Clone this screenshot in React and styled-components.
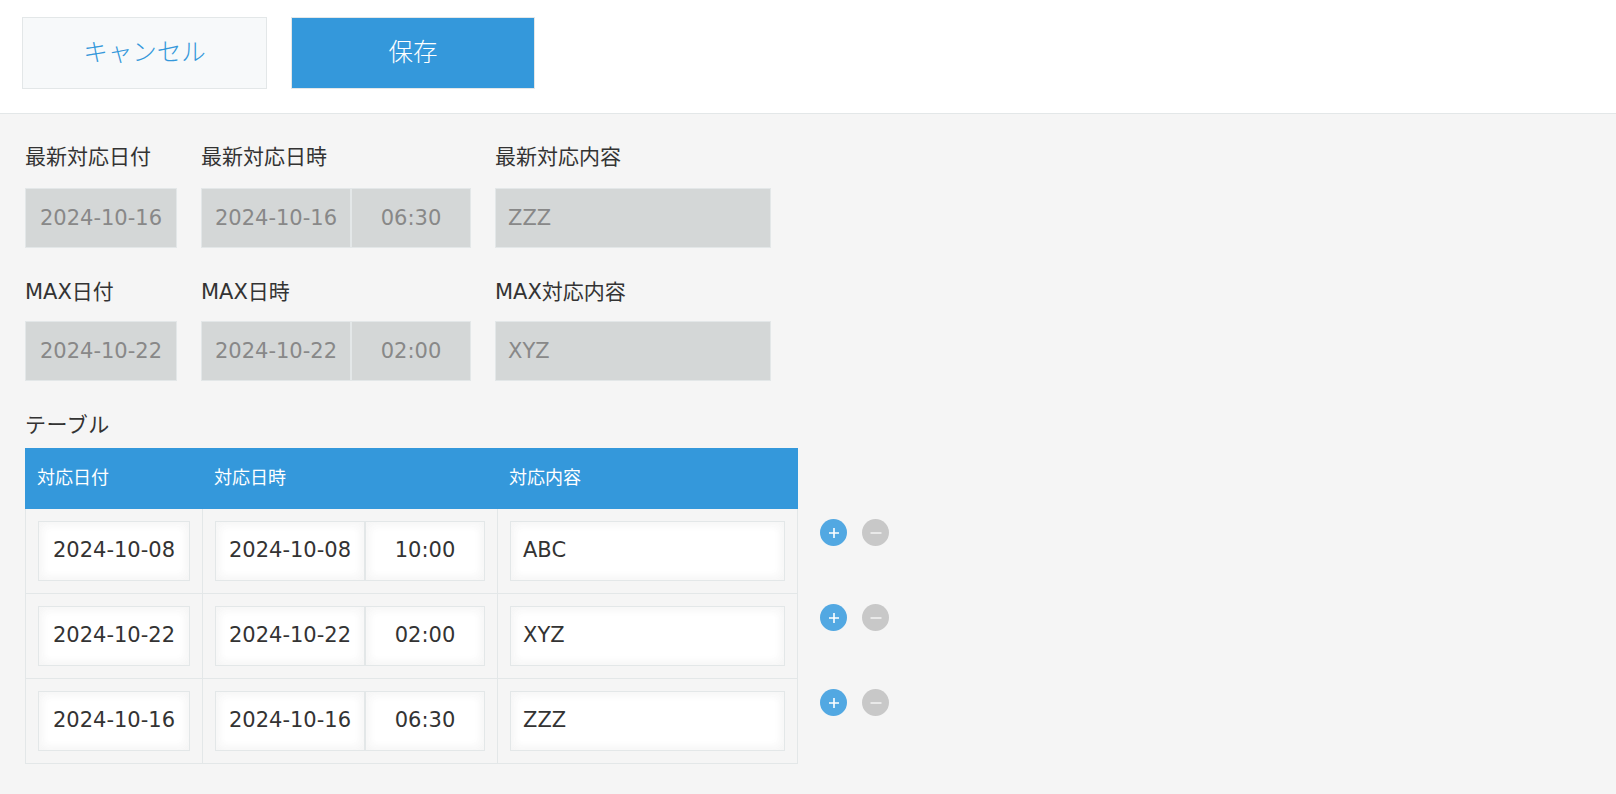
import styled, { createGlobalStyle } from "styled-components";

const GlobalStyle = createGlobalStyle`
  html, body {
    margin: 0;
    padding: 0;
    background: #f5f5f5;
  }
  body {
    font-family: "DejaVu Sans", "Noto Sans CJK JP", sans-serif;
    color: #333;
  }
  * {
    box-sizing: border-box;
  }
`;

const summaryRows = [
  {
    labels: ["最新対応日付", "最新対応日時", "最新対応内容"],
    date: "2024-10-16",
    datetime: ["2024-10-16", "06:30"],
    text: "ZZZ",
  },
  {
    labels: ["MAX日付", "MAX日時", "MAX対応内容"],
    date: "2024-10-22",
    datetime: ["2024-10-22", "02:00"],
    text: "XYZ",
    low: true,
  },
];

const tableRows = [
  { date: "2024-10-08", time: "10:00", text: "ABC" },
  { date: "2024-10-22", time: "02:00", text: "XYZ" },
  { date: "2024-10-16", time: "06:30", text: "ZZZ" },
];

function RoundIcon({ minus }) {
  return (
    <svg width="14" height="14" viewBox="0 0 14 14">
      <path
        d={minus ? "M1.5 7h11" : "M2 7h10M7 2v10"}
        stroke="#fff"
        strokeWidth="1.6"
        opacity={minus ? 0.75 : 1}
      />
    </svg>
  );
}

function App() {
  return (
    <Page>
      <GlobalStyle />
      <Toolbar>
        <CancelButton>キャンセル</CancelButton>
        <SaveButton>保存</SaveButton>
      </Toolbar>
      <Content>
        {summaryRows.map((row) => (
          <SummaryRow key={row.labels[0]}>
            <FieldGroup $width={152}>
              <Label $low={row.low}>{row.labels[0]}</Label>
              <DisabledField $width={152} $center>
                {row.date}
              </DisabledField>
            </FieldGroup>
            <FieldGroup $width={270}>
              <Label $low={row.low}>{row.labels[1]}</Label>
              <Pair>
                <DisabledField $width={150} $center>
                  {row.datetime[0]}
                </DisabledField>
                <DisabledField $width={120} $center>
                  {row.datetime[1]}
                </DisabledField>
              </Pair>
            </FieldGroup>
            <FieldGroup $width={276}>
              <Label $low={row.low}>{row.labels[2]}</Label>
              <DisabledField $width={276}>{row.text}</DisabledField>
            </FieldGroup>
          </SummaryRow>
        ))}
        <TableLabel>テーブル</TableLabel>
        <TableWrap>
          <Table>
            <colgroup>
              <col width="177" />
              <col width="295" />
              <col width="300" />
            </colgroup>
            <thead>
              <tr>
                <HeadCell>対応日付</HeadCell>
                <HeadCell>対応日時</HeadCell>
                <HeadCell>対応内容</HeadCell>
              </tr>
            </thead>
            <tbody>
              {tableRows.map((row) => (
                <tr key={row.text}>
                  <BodyCell>
                    <EditField $width={152} $center>
                      {row.date}
                    </EditField>
                  </BodyCell>
                  <BodyCell>
                    <Pair>
                      <EditField $width={150} $center>
                        {row.date}
                      </EditField>
                      <EditField $width={120} $center>
                        {row.time}
                      </EditField>
                    </Pair>
                  </BodyCell>
                  <BodyCell>
                    <EditField $width={275}>{row.text}</EditField>
                  </BodyCell>
                </tr>
              ))}
            </tbody>
          </Table>
          <RowActions>
            {tableRows.map((row) => (
              <ActionRow key={row.text}>
                <RoundButton $color="#52a8e2">
                  <RoundIcon />
                </RoundButton>
                <RoundButton $color="#c8c8c8">
                  <RoundIcon minus />
                </RoundButton>
              </ActionRow>
            ))}
          </RowActions>
        </TableWrap>
      </Content>
    </Page>
  );
}

const Page = styled.div`
  min-height: 100vh;
  background: #f5f5f5;
`;

const Toolbar = styled.div`
  display: flex;
  gap: 24px;
  height: 114px;
  padding: 17px 0 0 22px;
  background: #fff;
  border-bottom: 1px solid #e3e7e8;
`;

const CancelButton = styled.div`
  display: flex;
  align-items: center;
  justify-content: center;
  width: 245px;
  height: 72px;
  padding-bottom: 6px;
  background: #f7f9fa;
  border: 1px solid #e3e7e8;
  color: #3498db;
  font-size: 24.5px;
  font-weight: 300;
`;

const SaveButton = styled(CancelButton)`
  width: 244px;
  background: #3498db;
  color: #fff;
`;

const Content = styled.div`
  padding: 26px 0 0 25px;
`;

const SummaryRow = styled.div`
  display: flex;
  gap: 24px;
  margin-bottom: 25px;
`;

const FieldGroup = styled.div`
  width: ${(p) => p.$width}px;
`;

const Label = styled.div`
  height: 34px;
  margin-top: ${(p) => (p.$low ? 2 : 0)}px;
  margin-bottom: ${(p) => (p.$low ? 12 : 14)}px;
  font-size: 21px;
  line-height: 34px;
  white-space: nowrap;
`;

const Pair = styled.div`
  display: flex;
`;

const DisabledField = styled.div`
  width: ${(p) => p.$width}px;
  height: 60px;
  padding: 0 ${(p) => (p.$center ? 0 : 12)}px;
  background: #d4d7d7;
  border: 1px solid #e3e7e8;
  color: #888;
  font-size: 21px;
  line-height: 58px;
  text-align: ${(p) => (p.$center ? "center" : "left")};
  white-space: nowrap;
`;

const EditField = styled(DisabledField)`
  background: #fff;
  color: #333;
  line-height: 56px;
  box-shadow: 1px 1px 12px #f5f5f5 inset, -1px -1px 12px #f5f5f5 inset;
`;

const TableLabel = styled.div`
  height: 36px;
  padding-top: 2px;
  margin-bottom: 6px;
  font-size: 21px;
  line-height: 34px;
  letter-spacing: 0.5px;
`;

const TableWrap = styled.div`
  display: flex;
  align-items: flex-start;
`;

const Table = styled.table`
  width: 772px;
  table-layout: fixed;
  border-collapse: collapse;
  border-spacing: 0;
`;

const HeadCell = styled.th`
  height: 60px;
  padding: 0 11px 6px;
  background: #3498db;
  border: 1px solid #3498db;
  color: #fff;
  font-size: 18px;
  font-weight: 400;
  text-align: left;
`;

const BodyCell = styled.td`
  height: 85px;
  padding: 12px;
  border: 1px solid #e3e7e8;
  vertical-align: top;
`;

const RowActions = styled.div`
  padding: 71px 0 0 22px;
`;

const ActionRow = styled.div`
  display: flex;
  gap: 15px;
  height: 85px;
`;

const RoundButton = styled.div`
  display: flex;
  align-items: center;
  justify-content: center;
  width: 27px;
  height: 27px;
  border-radius: 50%;
  background: ${(p) => p.$color};
`;

export default App;
